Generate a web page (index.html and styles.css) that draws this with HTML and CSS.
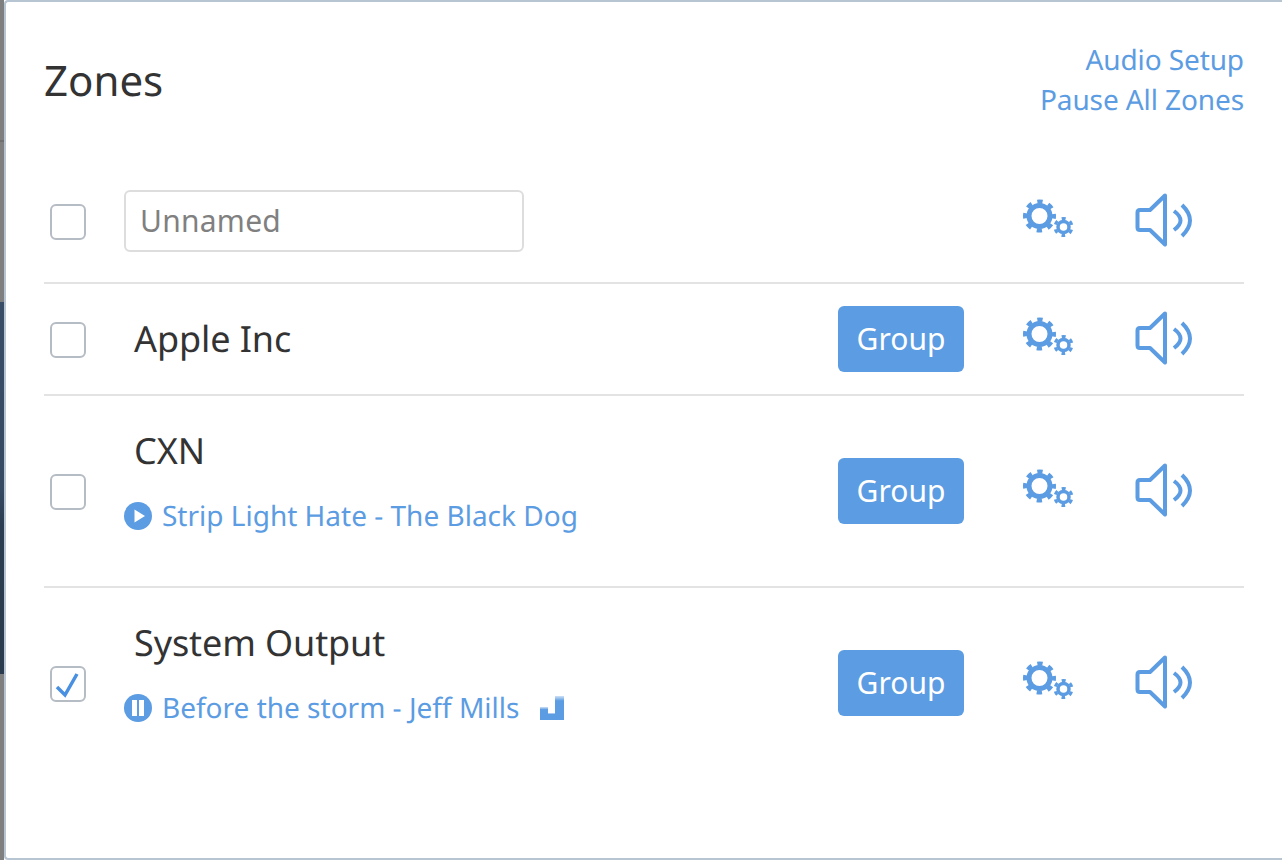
FILE: index.html
```html
<!DOCTYPE html>
<html>
<head>
  <title>Zones</title>
  <link rel="stylesheet" href="styles.css">
</head>
<body>
  <!-- Shared icons -->
  <svg class="icon-defs" xmlns="http://www.w3.org/2000/svg">
    <symbol id="gears" viewBox="0 0 52 40">
      <circle cx="17.5" cy="18" r="10.5" fill="none" stroke="currentColor" stroke-width="5"/>
      <circle cx="17.5" cy="18" r="14.5" fill="none" stroke="currentColor" stroke-width="4" stroke-dasharray="5.4 5.99" stroke-dashoffset="2.7"/>
      <circle cx="41.5" cy="29" r="5.5" fill="none" stroke="currentColor" stroke-width="3.5"/>
      <circle cx="41.5" cy="29" r="8.5" fill="none" stroke="currentColor" stroke-width="3" stroke-dasharray="4 4.9" stroke-dashoffset="2" transform="rotate(90 41.5 29)"/>
    </symbol>
    <symbol id="speaker" viewBox="0 0 60 56">
      <path d="M31 3.5 L16 18 H6 Q3.5 18 3.5 20.5 V35.5 Q3.5 38 6 38 H16 L31 52.5 Z" fill="none" stroke="currentColor" stroke-width="4" stroke-linejoin="round"/>
      <path d="M40 19 Q53 28.5 40 38" fill="none" stroke="currentColor" stroke-width="4"/>
      <path d="M48 13 Q64 28.5 48 44" fill="none" stroke="currentColor" stroke-width="4"/>
    </symbol>
  </svg>

  <div class="backdrop">
    <div class="backdrop-top"></div>
    <div class="backdrop-line"></div>
    <div class="backdrop-mid"></div>
    <div class="backdrop-dark"></div>
    <div class="backdrop-bottom"></div>
  </div>

  <div class="modal">
    <!-- Header -->
    <div class="modal-header">
      <h1>Zones</h1>
      <div class="header-links">
        <a>Audio Setup</a>
        <a>Pause All Zones</a>
      </div>
    </div>

    <!-- Zone list -->
    <div class="zone zone-new">
      <span class="check"></span>
      <input class="zone-input" type="text" placeholder="Unnamed">
      <svg class="icon-gears"><use href="#gears"/></svg>
      <svg class="icon-speaker"><use href="#speaker"/></svg>
    </div>

    <div class="zone zone-short">
      <span class="check"></span>
      <div class="zone-info">
        <div class="zone-name">Apple Inc</div>
      </div>
      <button class="group-btn">Group</button>
      <svg class="icon-gears"><use href="#gears"/></svg>
      <svg class="icon-speaker"><use href="#speaker"/></svg>
    </div>

    <div class="zone zone-tall">
      <span class="check"></span>
      <div class="zone-info">
        <div class="zone-name">CXN</div>
        <div class="track">
          <svg class="track-state" viewBox="0 0 28 28">
            <circle cx="14" cy="14" r="14" fill="currentColor"/>
            <path d="M10.5 7.5 L21 14 L10.5 20.5 Z" fill="#fff"/>
          </svg>
          <a>Strip Light Hate - The Black Dog</a>
        </div>
      </div>
      <button class="group-btn">Group</button>
      <svg class="icon-gears"><use href="#gears"/></svg>
      <svg class="icon-speaker"><use href="#speaker"/></svg>
    </div>

    <div class="zone zone-tall zone-last">
      <span class="check">
        <svg class="check-mark" viewBox="0 0 32 32">
          <path d="M5 19 L13 27 L25 6" fill="none" stroke="#4a90e2" stroke-width="3.5"/>
        </svg>
      </span>
      <div class="zone-info">
        <div class="zone-name">System Output</div>
        <div class="track">
          <svg class="track-state" viewBox="0 0 28 28">
            <circle cx="14" cy="14" r="14" fill="currentColor"/>
            <rect x="8" y="6" width="5" height="16" fill="#fff"/>
            <rect x="15" y="6" width="5" height="16" fill="#fff"/>
          </svg>
          <a>Before the storm - Jeff Mills</a>
          <svg class="track-bars" viewBox="0 0 24 24">
            <defs>
              <linearGradient id="barFade" x1="0" y1="0" x2="0" y2="1">
                <stop offset="0" stop-color="#cfe1f6"/>
                <stop offset="0.2" stop-color="#5c9ce2"/>
              </linearGradient>
            </defs>
            <rect x="0" y="11" width="8" height="13" fill="url(#barFade)"/>
            <rect x="8" y="17" width="7" height="7" fill="url(#barFade)"/>
            <rect x="15" y="0" width="9" height="24" fill="url(#barFade)"/>
          </svg>
        </div>
      </div>
      <button class="group-btn">Group</button>
      <svg class="icon-gears"><use href="#gears"/></svg>
      <svg class="icon-speaker"><use href="#speaker"/></svg>
    </div>
  </div>
</body>
</html>
```

FILE: styles.css
```css
/* General Page Styling */
html, body {
  height: 100%;
}
body {
  margin: 0;
  display: flex;
  height: 860px;
  overflow: hidden;
  font-family: "Noto Sans", "Open Sans", sans-serif;
  text-rendering: geometricPrecision;
  color: #333;
  background: #fff;
}
a {
  color: #5c9ce2;
}
.icon-defs {
  display: none;
}
/* Dimmed page behind the dialog */
.backdrop {
  width: 4px;
  flex: none;
  display: flex;
  flex-direction: column;
  background: #7f7f7f;
}
.backdrop-top {
  height: 140px;
}
.backdrop-line {
  height: 2px;
  background: #6f6f6f;
}
.backdrop-mid {
  height: 160px;
}
.backdrop-dark {
  height: 372px;
  background: linear-gradient(#3a4d66, #364a62 50%, #2b3d50 60%, #2a3b4d);
}
.backdrop-bottom {
  flex: 1;
}
/* Dialog */
.modal {
  flex: 1;
  box-sizing: border-box;
  height: 860px;
  padding: 0 38px;
  background: #fff;
  border: 2px solid #b7c4d1;
  border-right: none;
  border-radius: 4px 0 0 4px;
}
.modal-header {
  height: 160px;
  display: flex;
  justify-content: space-between;
  align-items: flex-start;
}
h1 {
  margin: 51px 0 0;
  font-size: 42px;
  line-height: 56px;
  font-weight: 400;
}
.header-links {
  margin-top: 38px;
  display: flex;
  flex-direction: column;
  align-items: flex-end;
  font-size: 28px;
  line-height: 40px;
  letter-spacing: -0.1px;
}
/* Zone rows */
.zone {
  display: flex;
  align-items: center;
  box-sizing: border-box;
  border-bottom: 2px solid #e3e3e3;
  padding: 0 50px 0 6px;
}
.zone-new {
  height: 122px;
}
.zone-short {
  height: 112px;
}
.zone-tall {
  height: 192px;
}
.zone-last {
  border-bottom-color: transparent;
}
.check {
  flex: none;
  box-sizing: border-box;
  width: 36px;
  height: 36px;
  margin-top: 2px;
  margin-right: 38px;
  border: 2px solid #b6bcc4;
  border-radius: 6px;
  display: flex;
}
.zone-new .check {
  margin-top: 0;
}
.check-mark {
  width: 32px;
  height: 32px;
}
.zone-input {
  box-sizing: border-box;
  width: 400px;
  height: 62px;
  padding: 0 14px 2px;
  margin-top: -2px;
  margin-right: 498px;
  font: inherit;
  font-size: 30px;
  letter-spacing: 0.25px;
  color: #333;
  border: 2px solid #ddd;
  border-radius: 6px;
  outline: none;
}
.zone-input::placeholder {
  color: #808080;
}
.zone-info {
  flex: 1;
  min-width: 0;
}
.zone-tall .zone-info {
  padding-bottom: 18px;
}
.zone-name {
  padding-left: 10px;
  font-size: 36px;
  line-height: 44px;
  letter-spacing: -0.1px;
}
.track {
  display: flex;
  align-items: center;
  margin-top: 23px;
  font-size: 28px;
  line-height: 40px;
}
.track-state {
  width: 28px;
  height: 28px;
  margin-right: 10px;
  color: #5c9ce2;
}
.track-bars {
  width: 24px;
  height: 24px;
  margin-left: 21px;
}
.group-btn {
  flex: none;
  width: 126px;
  height: 66px;
  margin-right: 58px;
  padding: 0 0 2px;
  font: inherit;
  font-size: 30px;
  color: #fff;
  background: #5c9ce2;
  border: none;
  border-radius: 6px;
}
.icon-gears {
  flex: none;
  width: 52px;
  height: 40px;
  margin-top: -6px;
  margin-right: 60px;
  color: #5c9ce2;
}
.icon-speaker {
  flex: none;
  width: 60px;
  height: 56px;
  margin-top: -2px;
  color: #5c9ce2;
}
.zone-new .icon-gears {
  margin-top: -8px;
}
.zone-new .icon-speaker {
  margin-top: -4px;
}
```
